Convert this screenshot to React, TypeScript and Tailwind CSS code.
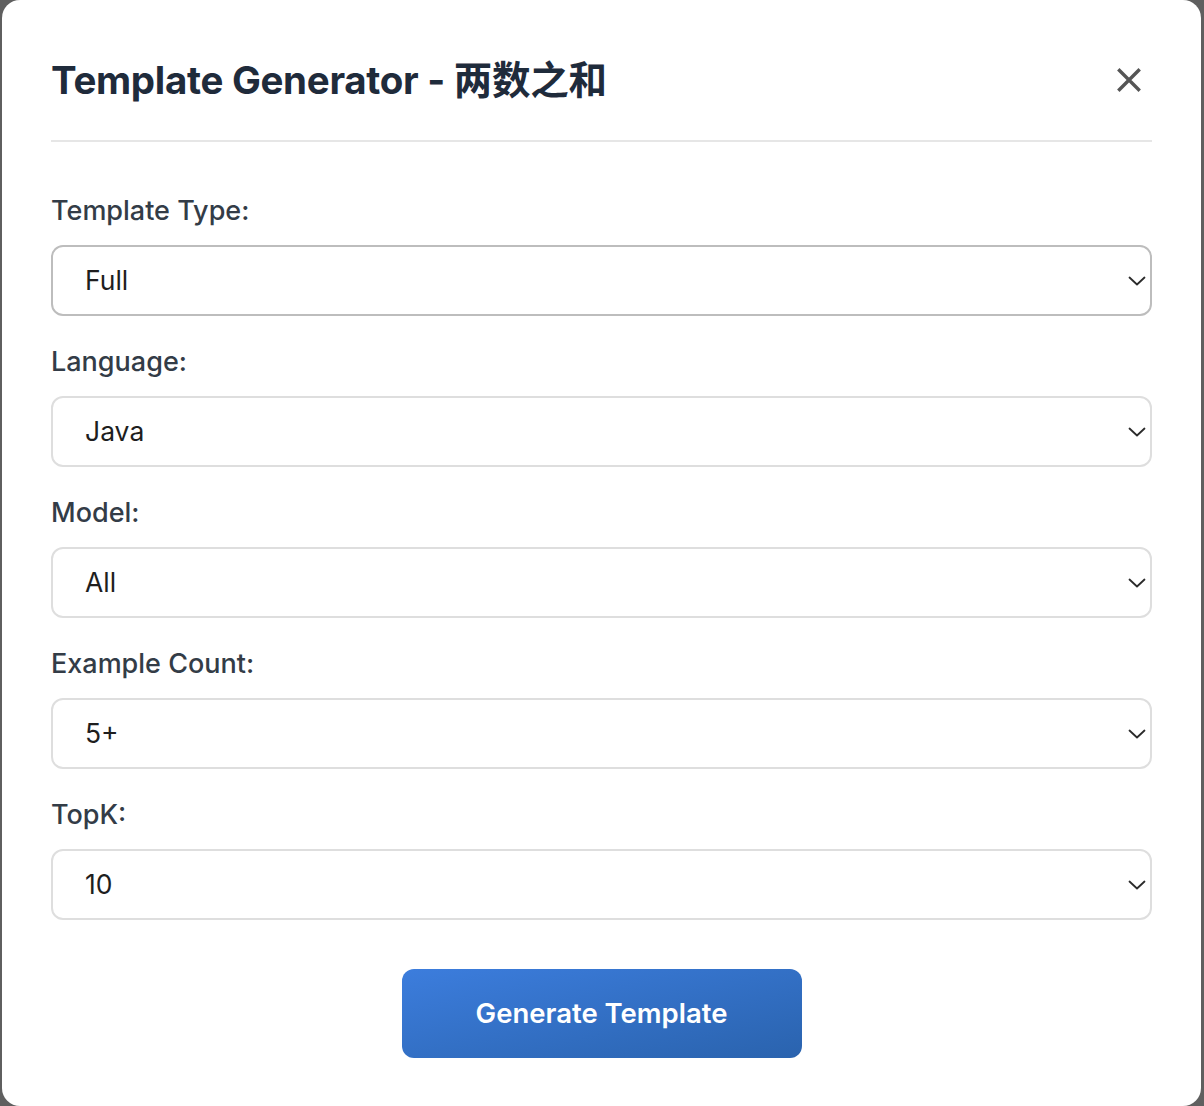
import React, { useState } from 'react';

const fields = [
  { label: 'Template Type:', options: ['Full', 'Partial', 'Skeleton'], focused: true },
  { label: 'Language:', options: ['Java', 'Python', 'C++', 'JavaScript', 'Go'] },
  { label: 'Model:', options: ['All', 'GPT-4', 'Claude', 'Gemini'] },
  { label: 'Example Count:', options: ['5+', '1', '2', '3', '4'] },
  { label: 'TopK:', options: ['10', '5', '20', '50'] },
];

const Chevron = () => (
  <svg
    className="pointer-events-none absolute right-[6px] top-1/2 -translate-y-1/2"
    width="18"
    height="12"
    viewBox="0 0 18 12"
    fill="none"
  >
    <path d="M1.5 2.5 L9 9.5 L16.5 2.5" stroke="#2b2b2b" strokeWidth="1.8" strokeLinecap="round" strokeLinejoin="round" />
  </svg>
);

const App: React.FC = () => {
  const [values, setValues] = useState<string[]>(fields.map((f) => f.options[0]));

  return (
    <div className="min-h-screen w-full bg-[#5f5f5f] font-['Inter','Noto_Sans_CJK_SC',sans-serif]">
      {/* Modal */}
      <div className="ml-[2px] w-[1199px] h-[1106px] bg-white rounded-[18px] px-[49px] pt-[56px]">
        {/* Header */}
        <div className="flex items-center justify-between border-b-2 border-[#e6e6e6] pb-[36px]">
          <h2 className="text-[38.5px] leading-[48px] font-bold text-[#1f2b3b] tracking-[-0.3px]">
            Template Generator - 两数之和
          </h2>
          <button className="mr-[10px] w-[26px] h-[26px] flex items-center justify-center" aria-label="Close">
            <svg width="24" height="24" viewBox="0 0 24 24" fill="none">
              <path d="M2.5 2.5 L21.5 21.5 M21.5 2.5 L2.5 21.5" stroke="#555555" strokeWidth="3.4" strokeLinecap="square" />
            </svg>
          </button>
        </div>

        {/* Form */}
        <div className="pt-[51px]">
          {fields.map((f, i) => (
            <div key={f.label} className="mb-[28px]">
              <label className="block text-[27px] leading-[36px] font-medium text-[#333c47] mb-[16px]">
                {f.label}
              </label>
              <div className="relative">
                <select
                  value={values[i]}
                  onChange={(e) => {
                    const next = [...values];
                    next[i] = e.target.value;
                    setValues(next);
                  }}
                  className={
                    f.focused
                      ? 'appearance-none w-full h-[71px] rounded-[12px] border-2 border-[#bdbdbd] bg-white pl-[32px] pr-[40px] text-[26.5px] text-[#1e1e1e] outline-none'
                      : 'appearance-none w-full h-[71px] rounded-[12px] border-2 border-[#dedede] bg-white pl-[32px] pr-[40px] text-[26.5px] text-[#1e1e1e] outline-none'
                  }
                >
                  {f.options.map((o) => (
                    <option key={o} value={o}>
                      {o}
                    </option>
                  ))}
                </select>
                <Chevron />
              </div>
            </div>
          ))}

          <div className="flex justify-center pt-[21px]">
            <button className="w-[400px] h-[89px] rounded-[12px] bg-gradient-to-br from-[#3c7ddd] to-[#2a63ae] text-white text-[27.5px] font-semibold">
              Generate Template
            </button>
          </div>
        </div>
      </div>
    </div>
  );
};

export default App;
